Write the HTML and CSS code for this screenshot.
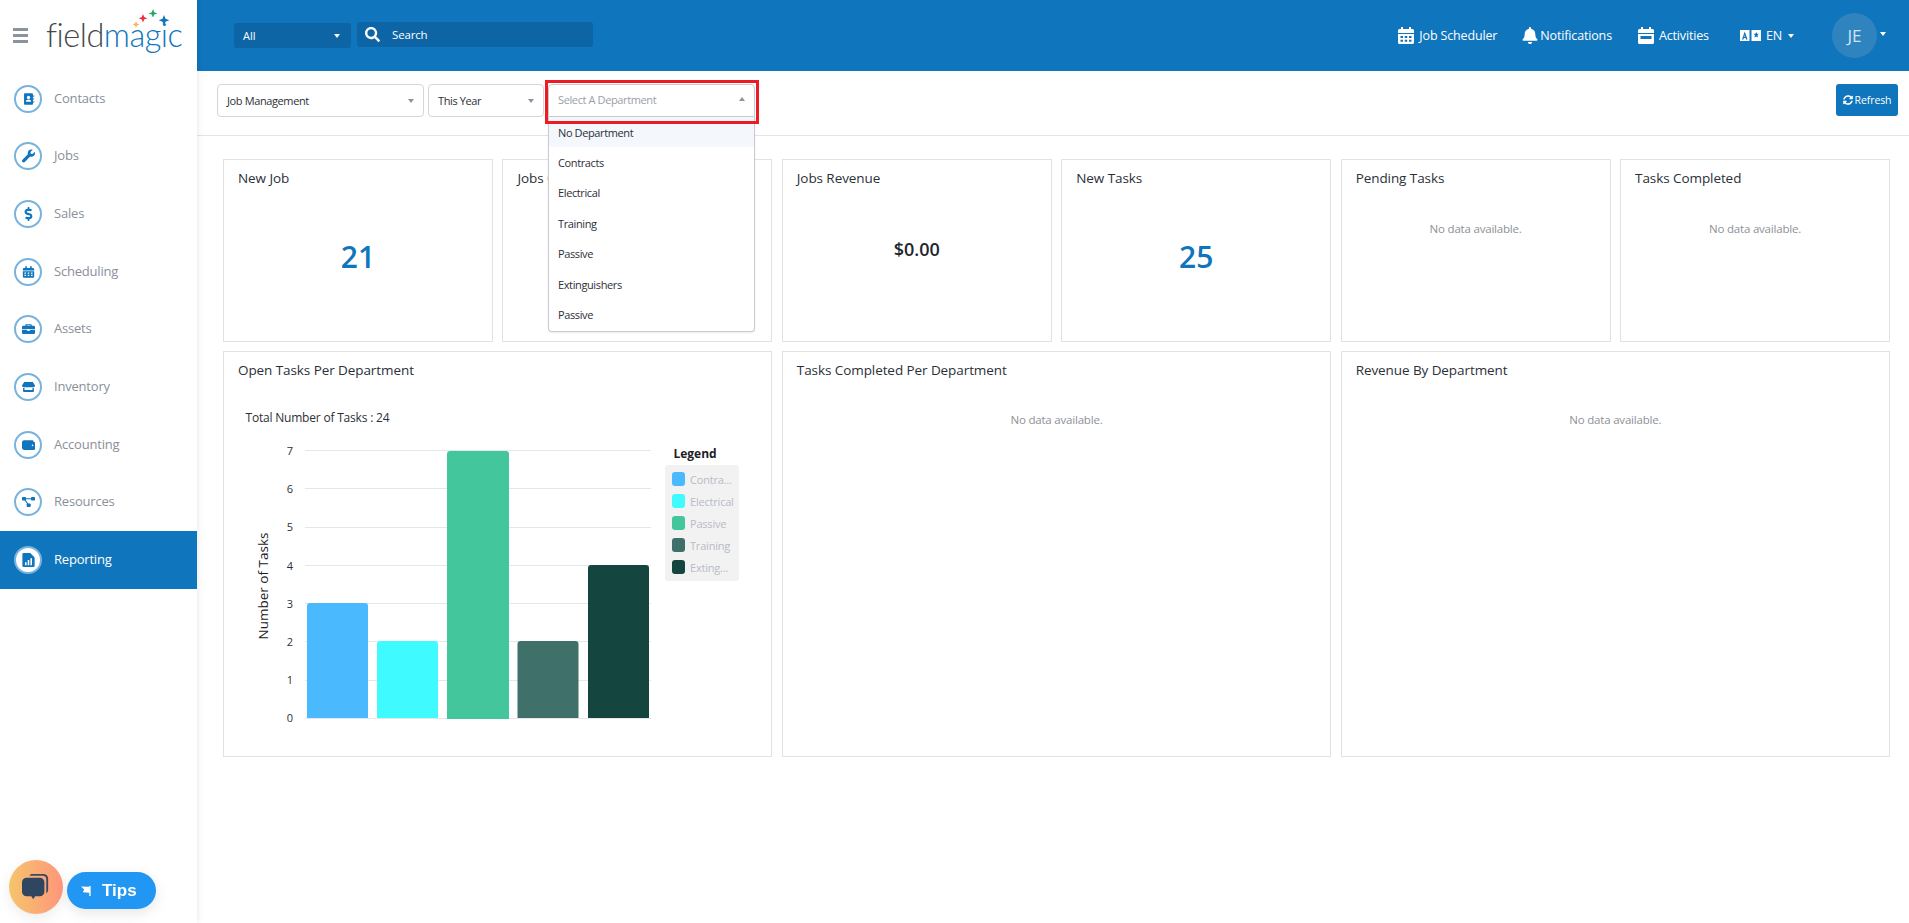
FILE: index.html
```html
<!DOCTYPE html>
<html lang="en">
<head>
<meta charset="utf-8">
<title>Reporting</title>
<link rel="stylesheet" href="styles.css">
</head>
<body>
<div class="app">
  <aside class="sidebar">
    <div class="brand">
      <div class="burger"><span></span><span></span><span></span></div>
      <div class="logo">
        <span class="logo-dark">field</span><span class="logo-blue">magic</span>
        <svg class="logo-stars" viewBox="0 0 40 20"><path fill="#f7b45a" d="M3 12l1 2.500 2.500 1-2.500 1-1 2.500-1-2.500-2.500-1 2.500-1z"/><path fill="#ed2f3f" d="M10 5l1.200 3 3 1.200-3 1.200-1.200 3-1.200-3-3-1.200 3-1.200z"/><path fill="#1fa866" d="M20 0l1.200 3.200 3.200 1.200-3.200 1.200-1.200 3.200-1.200-3.200-3.200-1.200 3.200-1.200z"/><path fill="#0f75bc" d="M31 6l1.500 3.800 3.800 1.500-3.800 1.500-1.500 3.800-1.500-3.800-3.800-1.500 3.800-1.500z"/></svg>
      </div>
    </div>
    <nav class="nav">
      <a class="nav-item"><span class="ring"><svg viewBox="0 0 16 16"><path fill="#0f75bc" d="M3.500 1h9a1 1 0 0 1 1 1v12a1 1 0 0 1-1 1h-9a1 1 0 0 1-1-1V2a1 1 0 0 1 1-1z"/><circle cx="8" cy="6" r="2" fill="#fff"/><path fill="#fff" d="M4.800 11.500c0-2 1.400-3 3.200-3s3.200 1 3.200 3z"/><path fill="#0f75bc" d="M14 3.500h1v2h-1zM14 7h1v2h-1zM14 10.500h1v2h-1z"/></svg></span>Contacts</a>
      <a class="nav-item"><span class="ring"><svg viewBox="0 0 512 512"><path fill="#0f75bc" d="M507.730 109.100c-2.240-9.030-13.540-12.090-20.120-5.510l-74.360 74.360-67.880-11.310-11.310-67.880 74.360-74.360c6.620-6.620 3.430-17.900-5.660-20.160-47.380-11.740-99.550.91-136.580 37.930-39.640 39.640-50.550 97.100-34.050 147.200L18.740 402.760c-24.990 24.990-24.990 65.510 0 90.500 24.990 24.990 65.510 24.990 90.500 0l213.210-213.210c50.120 16.710 107.470 5.680 147.370-34.220 37.070-37.070 49.700-89.320 37.910-136.730z"/></svg></span>Jobs</a>
      <a class="nav-item"><span class="ring"><svg viewBox="0 0 288 512"><path fill="#0f75bc" d="M209.200 233.400l-108-31.600C88.700 198.200 80 186.500 80 173.500c0-16.300 13.200-29.500 29.500-29.500h66.300c12.200 0 24.200 3.700 34.200 10.500 6.100 4.100 14.300 3.100 19.500-2l34.800-34c7.100-6.900 6.100-18.400-1.800-24.500C238 74.800 207.400 64.100 176 64V16c0-8.800-7.200-16-16-16h-32c-8.800 0-16 7.200-16 16v48h-2.500C45.800 64-5.400 118.700.5 183.600c4.200 46.100 39.400 83.600 83.800 96.600l102.500 30c12.500 3.700 21.200 15.300 21.200 28.300 0 16.300-13.200 29.500-29.500 29.500h-66.300C100 368 88 364.300 78 357.500c-6.100-4.100-14.300-3.100-19.500 2l-34.800 34c-7.100 6.900-6.100 18.400 1.800 24.500 24.500 19.200 55.100 29.900 86.500 30v48c0 8.800 7.200 16 16 16h32c8.800 0 16-7.200 16-16v-48.200c46.600-.9 90.300-28.600 105.700-72.700 21.500-61.600-14.600-124.800-72.500-141.700z"/></svg></span>Sales</a>
      <a class="nav-item"><span class="ring"><svg viewBox="0 0 16 16"><path fill="#0f75bc" d="M4 1h2v2h4V1h2v2h1.500A1.500 1.500 0 0 1 15 4.500V6H1V4.500A1.500 1.500 0 0 1 2.500 3H4zM1 7h14v6.500a1.500 1.500 0 0 1-1.500 1.500h-11A1.500 1.500 0 0 1 1 13.500z"/><path fill="#fff" d="M3 8.500h2V10H3zM7 8.500h2V10H7zM11 8.500h2V10h-2zM3 11.500h2V13H3zM7 11.500h2V13H7zM11 11.500h2V13h-2z"/></svg></span>Scheduling</a>
      <a class="nav-item"><span class="ring"><svg viewBox="0 0 16 16"><path fill="#0f75bc" d="M5 2h6a1 1 0 0 1 1 1v1h2.500A1.500 1.500 0 0 1 16 5.500V8H0V5.500A1.500 1.500 0 0 1 1.500 4H4V3a1 1 0 0 1 1-1zm.500 1.500V4h5v-.5zM0 9h6.500v1.500h3V9H16v3.500a1.500 1.500 0 0 1-1.500 1.500h-13A1.500 1.500 0 0 1 0 12.500z"/></svg></span>Assets</a>
      <a class="nav-item"><span class="ring"><svg viewBox="0 0 18 16"><path fill="#0f75bc" d="M3 1h12l3 5a2.500 2.500 0 0 1-2 2.500H2A2.500 2.500 0 0 1 0 6zM1.500 9.500h2V12h11V9.500h2V14a1 1 0 0 1-1 1h-13a1 1 0 0 1-1-1z"/></svg></span>Inventory</a>
      <a class="nav-item"><span class="ring"><svg viewBox="0 0 16 16"><path fill="#0f75bc" fill-rule="evenodd" d="M2.500 2H13a1 1 0 0 1 1 1v1h.5A1.500 1.500 0 0 1 16 5.500v7a1.500 1.500 0 0 1-1.500 1.500h-12A2.500 2.500 0 0 1 0 11.500v-7A2.500 2.500 0 0 1 2.500 2zM12 8.500a1 1 0 1 0 2 0 1 1 0 0 0-2 0z"/></svg></span>Accounting</a>
      <a class="nav-item"><span class="ring"><svg viewBox="0 0 18 16"><path fill="none" stroke="#0f75bc" stroke-width="1.500" d="M3 3.500h12M3 3.500l6 8.500"/><rect x="0" y="1" width="5.500" height="5" rx="1" fill="#0f75bc"/><rect x="12.500" y="1" width="5.500" height="5" rx="1" fill="#0f75bc"/><rect x="6.500" y="10" width="5.500" height="5" rx="1" fill="#0f75bc"/></svg></span>Resources</a>
      <a class="nav-item active"><span class="ring"><svg viewBox="0 0 14 16"><path fill="#0f75bc" d="M1.500 0H9l5 5v9.500a1.500 1.500 0 0 1-1.500 1.500h-11A1.500 1.500 0 0 1 0 14.500v-13A1.500 1.500 0 0 1 1.500 0z"/><path fill="#fff" d="M3 10.500h1.800V14H3zM6.100 8h1.800v6H6.100zM9.200 6h1.800v8H9.200z"/></svg></span>Reporting</a>
    </nav>
  </aside>

  <main class="main">
    <header class="topbar">
      <div class="scope">All<i class="caret caret-white"></i></div>
      <div class="search">
        <svg class="search-icon" viewBox="0 0 512 512"><path fill="#fff" d="M505 442.700L405.300 343c-4.500-4.500-10.600-7-17-7H372c27.600-35.300 44-79.700 44-128C416 93.100 322.900 0 208 0S0 93.100 0 208s93.100 208 208 208c48.300 0 92.700-16.400 128-44v16.300c0 6.400 2.500 12.500 7 17l99.700 99.700c9.400 9.400 24.600 9.400 33.900 0l28.300-28.300c9.400-9.400 9.400-24.600.1-34zM208 336c-70.700 0-128-57.200-128-128 0-70.700 57.200-128 128-128 70.700 0 128 57.200 128 128 0 70.700-57.200 128-128 128z"/></svg>
        <span>Search</span>
      </div>
      <div class="top-actions">
        <a class="top-link sched"><svg viewBox="0 0 16 17"><path fill="#fff" d="M3 0h2v2h6V0h2v2h1.500A1.500 1.500 0 0 1 16 3.500V6H0V3.500A1.500 1.500 0 0 1 1.500 2H3zM0 7h16v8.500a1.500 1.500 0 0 1-1.500 1.500h-13A1.500 1.500 0 0 1 0 15.500z"/><path fill="#0f75bc" d="M2.500 9h2.500v2H2.500zM6.750 9h2.500v2h-2.500zM11 9h2.500v2H11zM2.500 12.700h2.500v2H2.500zM6.750 12.700h2.500v2h-2.500zM11 12.700h2.500v2H11z"/></svg>Job Scheduler</a>
        <a class="top-link notif"><svg viewBox="0 0 448 512"><path fill="#fff" d="M224 512c35.320 0 63.970-28.650 63.970-64H160.030c0 35.350 28.650 64 63.970 64zm215.390-149.710c-19.320-20.760-55.470-51.990-55.470-154.290 0-77.700-54.480-139.900-127.940-155.160V32c0-17.670-14.320-32-31.980-32s-31.980 14.330-31.980 32v20.840C118.560 68.100 64.080 130.300 64.080 208c0 102.300-36.150 133.530-55.470 154.290-6 6.450-8.660 14.160-8.610 21.710.11 16.400 12.980 32 32.100 32h383.800c19.120 0 32-15.600 32.100-32 .05-7.550-2.610-15.270-8.610-21.710z"/></svg>Notifications</a>
        <a class="top-link activ"><svg viewBox="0 0 16 17"><path fill="#fff" d="M3 0h2v2h6V0h2v2h1.500A1.500 1.500 0 0 1 16 3.500V6H0V3.500A1.500 1.500 0 0 1 1.500 2H3zM0 7h16v8.500a1.500 1.500 0 0 1-1.500 1.500h-13A1.500 1.500 0 0 1 0 15.500z"/><path fill="#0f75bc" d="M2.500 9h11v3h-11z"/></svg>Activities</a>
        <a class="top-link lang"><svg viewBox="0 0 21 11"><rect width="9.500" height="11" fill="#fff"/><rect x="11.500" width="9.500" height="11" fill="#fff"/><path fill="#0f75bc" d="M4.750 1.500L7.500 9.500H6.100l-.5-1.600H3.900l-.5 1.600H2zM4.250 6.800h1L4.750 5zM16.250 2l.8 1.800h1.700l-1.200 1.500.6 2.200-1.900-1-1.900 1 .6-2.200-1.200-1.500h1.700z"/></svg>EN<i class="caret caret-white"></i></a>
        <div class="avatar">JE</div>
        <i class="caret caret-white avatar-caret"></i>
      </div>
    </header>

    <div class="toolbar">
      <div class="select wide"><span>Job Management</span><i class="caret caret-gray"></i></div>
      <div class="select narrow"><span>This Year</span><i class="caret caret-gray"></i></div>
      <div class="dept-wrap">
        <div class="select wide open"><span class="placeholder">Select A Department</span><i class="caret caret-gray caret-up"></i></div>
        <ul class="dropdown">
          <li class="hover">No Department</li>
          <li>Contracts</li>
          <li>Electrical</li>
          <li>Training</li>
          <li>Passive</li>
          <li>Extinguishers</li>
          <li>Passive</li>
        </ul>
        <div class="highlight"></div>
      </div>
      <button class="refresh"><svg viewBox="0 0 512 512"><path fill="#fff" d="M370.720 133.280C339.458 104.008 298.888 87.962 255.848 88c-77.458.068-144.328 53.178-162.791 126.850-1.344 5.363-6.122 9.150-11.651 9.150H24.103c-7.498 0-13.194-6.807-11.807-14.176C33.933 94.924 134.813 8 256 8c66.448 0 126.791 26.136 171.315 68.685L463.030 40.970C478.149 25.851 504 36.559 504 57.941V192c0 13.255-10.745 24-24 24H345.941c-21.382 0-32.090-25.851-16.971-40.971l41.750-41.749zM32 296h134.059c21.382 0 32.090 25.851 16.971 40.971l-41.750 41.750c31.262 29.273 71.835 45.319 114.876 45.280 77.418-.07 144.315-53.144 162.787-126.849 1.344-5.363 6.122-9.150 11.651-9.150h57.304c7.498 0 13.194 6.807 11.807 14.176C478.067 417.076 377.187 504 256 504c-66.448 0-126.791-26.136-171.315-68.685L48.970 471.030C33.851 486.149 8 475.441 8 454.059V320c0-13.255 10.745-24 24-24z"/></svg>Refresh</button>
    </div>

    <section class="dashboard">
      <article class="card"><h3>New Job</h3><div class="big">21</div></article>
      <article class="card"><h3>Jobs Completed</h3></article>
      <article class="card"><h3>Jobs Revenue</h3><div class="money">$0.00</div></article>
      <article class="card"><h3>New Tasks</h3><div class="big">25</div></article>
      <article class="card"><h3>Pending Tasks</h3><p class="empty small-empty">No data available.</p></article>
      <article class="card"><h3>Tasks Completed</h3><p class="empty small-empty">No data available.</p></article>

      <article class="card panel">
        <h3>Open Tasks Per Department</h3>
        <svg class="chart" viewBox="0 0 548 340" width="548" height="340">
          <text class="total" x="21.500" y="16">Total Number of Tasks : 24</text>
          <g class="grid">
            <line x1="81" x2="427" y1="44.500" y2="44.500"/><line x1="81" x2="427" y1="82.500" y2="82.500"/><line x1="81" x2="427" y1="121.500" y2="121.500"/><line x1="81" x2="427" y1="159.500" y2="159.500"/><line x1="81" x2="427" y1="197.500" y2="197.500"/><line x1="81" x2="427" y1="235.500" y2="235.500"/><line x1="81" x2="427" y1="274.500" y2="274.500"/><line x1="81" x2="427" y1="312.500" y2="312.500"/>
          </g>
          <g class="ticks">
            <text x="66" y="49">7</text><text x="66" y="87">6</text><text x="66" y="125">5</text><text x="66" y="164">4</text><text x="66" y="202">3</text><text x="66" y="240">2</text><text x="66" y="278">1</text><text x="66" y="316">0</text>
          </g>
          <text class="axis" transform="translate(44 180) rotate(-90)">Number of Tasks</text>
          <path fill="#4ab9fe" d="M83 312v-112a3 3 0 0 1 3-3h55a3 3 0 0 1 3 3v112z"/>
          <path fill="#3ffbff" d="M153 312v-74a3 3 0 0 1 3-3h55a3 3 0 0 1 3 3v74z"/>
          <path fill="#44c69d" d="M223 313v-265a3 3 0 0 1 3-3h56a3 3 0 0 1 3 3v265z"/>
          <path fill="#3f7069" d="M293.500 312v-74a3 3 0 0 1 3-3h55a3 3 0 0 1 3 3v74z"/>
          <path fill="#15453f" d="M364 312v-150a3 3 0 0 1 3-3h55a3 3 0 0 1 3 3v150z"/>
          <text class="legend-title" x="471" y="52">Legend</text>
          <rect x="441" y="59" width="74" height="116" rx="3" fill="#f2f2f2"/>
          <g class="legend">
            <rect x="448" y="66" width="13" height="14" rx="3" fill="#4ab9fe"/><text x="466" y="78">Contra...</text>
            <rect x="448" y="88" width="13" height="14" rx="3" fill="#3ffbff"/><text x="466" y="100">Electrical</text>
            <rect x="448" y="110" width="13" height="14" rx="3" fill="#44c69d"/><text x="466" y="122">Passive</text>
            <rect x="448" y="132" width="13" height="14" rx="3" fill="#3f7069"/><text x="466" y="144">Training</text>
            <rect x="448" y="154" width="13" height="14" rx="3" fill="#15453f"/><text x="466" y="166">Exting...</text>
          </g>
        </svg>
      </article>
      <article class="card panel"><h3>Tasks Completed Per Department</h3><p class="empty">No data available.</p></article>
      <article class="card panel"><h3>Revenue By Department</h3><p class="empty">No data available.</p></article>
    </section>
  </main>
</div>

<div class="floaters">
  <div class="chat"><svg viewBox="0 0 30 30"><path fill="#2f4560" d="M10 1h13a5 5 0 0 1 5 5v12a5 5 0 0 1-2 4V7a4 4 0 0 0-4-4H8a4 4 0 0 1 2-2z" opacity=".95"/><path fill="#2f4560" d="M5 5h14a5 5 0 0 1 5 5v10a5 5 0 0 1-5 5h-5l-2 3-2-3H5a5 5 0 0 1-5-5V10a5 5 0 0 1 5-5z"/></svg></div>
  <div class="tips"><svg viewBox="0 0 12 12"><path fill="#fff" d="M0 1.500l9 .5v-1h1.500v11H9V8.500L2 8l1.500-3.200z"/></svg>Tips</div>
</div>
</body>
</html>
```

FILE: styles.css
```css
* { box-sizing: border-box; }
html, body { margin: 0; height: 100%; background: #fff; overflow: hidden; }
body { font-family: "Open Sans", "Noto Sans", "Liberation Sans", sans-serif; font-size: 12px; color: #2b3038; }
a { color: inherit; text-decoration: none; }
h3, p, ul { margin: 0; padding: 0; }

.app { display: flex; height: 923px; }

/* sidebar */
.sidebar { width: 197px; flex: none; background: #fff; box-shadow: 0 0 6px rgba(0, 0, 0, .12); position: relative; z-index: 2; }
.brand { height: 70px; display: flex; align-items: center; padding-left: 13px; }
.burger { width: 15px; display: flex; flex-direction: column; gap: 3px; }
.burger span { height: 3px; background: #8b949c; }
.logo { position: relative; margin-left: 18px; font-family: Lato, "Open Sans", sans-serif; font-weight: 300; font-size: 32.500px; line-height: 40px; letter-spacing: -.5px; white-space: nowrap; }
.logo-dark { color: #45474b; }
.logo-blue { color: #0f75bc; }
.logo-stars { position: absolute; left: 87px; top: -6px; width: 40px; height: 20px; }
.nav { display: flex; flex-direction: column; }
.nav-item { height: 57.630px; display: flex; align-items: center; padding-left: 14px; gap: 12px; font-size: 13px; letter-spacing: -.2px; color: #8a8f9a; padding-bottom: 2px; }
.ring { width: 28px; height: 28px; border-radius: 50%; border: 2px solid #78b3dd; display: flex; align-items: center; justify-content: center; background: #fff; margin-top: 2px; }
.ring svg { width: 13px; height: 14px; }
.nav-item.active { background: #0f75bc; color: #fff; }
.nav-item.active .ring { box-shadow: 0 0 0 1px #fff inset; }

/* top bar */
.main { flex: 1; min-width: 0; }
.topbar { height: 71px; background: #0f75bc; display: flex; align-items: center; padding-left: 37px; color: #fff; }
.scope { width: 117px; height: 25px; margin-right: 6px; background: #0d65a5; border-radius: 3px; display: flex; align-items: center; justify-content: space-between; padding: 0 11px 0 9px; font-size: 11px; }
.search { width: 236px; height: 25px; margin-bottom: 2px; background: #0d65a5; border-radius: 3px; display: flex; align-items: center; padding-left: 8px; gap: 12px; font-size: 11.500px; letter-spacing: -.15px; }
.search-icon { width: 15px; height: 15px; }
.top-actions { margin-left: auto; display: flex; align-items: center; padding-right: 23px; }
.top-link { display: flex; align-items: center; font-size: 12.500px; letter-spacing: -.15px; white-space: nowrap; }
.top-link svg { height: 17px; width: 16px; }
.sched { gap: 5px; margin-right: 25px; }
.notif { gap: 2px; margin-right: 26px; }
.activ { gap: 5px; margin-right: 31px; }
.lang { gap: 5px; margin-right: 38px; }
.top-link.lang svg { width: 21px; height: 11px; }
.lang .caret { margin-left: 1px; }
.avatar { width: 45px; height: 45px; border-radius: 50%; background: #2f84c0; color: #cfe3f2; display: flex; align-items: center; justify-content: center; font-size: 17px; }
.avatar-caret { margin: -4px 0 0 3px; }

.caret { display: inline-block; width: 0; height: 0; border-left: 3.500px solid transparent; border-right: 3.500px solid transparent; border-top: 4px solid currentColor; }
.caret-white { color: #fff; }
.caret-gray { color: #8f939a; }
.caret-up { border-top: 0; border-bottom: 4px solid #8f939a; }

/* toolbar */
.toolbar { height: 65px; border-bottom: 1px solid #e2e4e6; padding: 13px 11px 0 20px; display: flex; align-items: flex-start; gap: 4px; font-size: 11px; letter-spacing: -.38px; }
.select { height: 33px; border: 1px solid #d3d6da; border-radius: 4px; background: #fff; display: flex; align-items: center; justify-content: space-between; padding: 0 9px; }
.wide { width: 207px; }
.narrow { width: 116px; }
.placeholder { color: #9a9ea6; }
.dept-wrap { position: relative; }
.select.open { border-radius: 4px 4px 0 0; border-color: #c8cbcf; padding-right: 9px; padding-bottom: 3px; }
.dropdown { position: absolute; left: 0; top: 33px; width: 207px; height: 215px; list-style: none; background: #fff; border: 1px solid #c8cbcf; border-top: 0; border-radius: 0 0 4px 4px; box-shadow: 0 1px 2px rgba(0, 0, 0, .08); z-index: 3; }
.dropdown li { height: 30.500px; padding-left: 9px; display: flex; align-items: center; }
.dropdown li.hover { height: 30px; background: #f4f8fc; }
.highlight { position: absolute; left: -3px; top: -4px; width: 214px; height: 44px; border: 3px solid #ed1c24; z-index: 4; pointer-events: none; }
.refresh { margin-left: auto; width: 62px; height: 32px; border: 0; border-radius: 3px; background: #0f75bc; color: #fff; font: inherit; font-size: 10.500px; letter-spacing: -.1px; display: flex; align-items: center; justify-content: center; gap: 2px; padding: 0; }
.refresh svg { width: 10px; height: 10px; }

/* dashboard */
.dashboard { padding: 23px 19px 0 26px; display: grid; grid-template-columns: repeat(6, 1fr); grid-template-rows: 183px 406px; column-gap: 9.500px; row-gap: 9px; }
.card { border: 1px solid #e0e2e5; padding: 0 14px; position: relative; min-width: 0; }
.card h3 { font-size: 13.500px; font-weight: 400; letter-spacing: -.08px; line-height: 18px; margin-top: 9px; color: #2b3038; white-space: nowrap; }
.big { font-size: 30px; line-height: 40px; font-weight: 600; color: #0f75bc; text-align: center; margin-top: 50px; }
.money { font-size: 18px; line-height: 24px; font-weight: 600; color: #22262c; text-align: center; margin-top: 50px; }
.empty { text-align: center; color: #8d9198; font-size: 11.500px; letter-spacing: -.2px; line-height: 16px; margin-top: 33px; }
.small-empty { margin-top: 34px; }
.panel { grid-column: span 2; padding-right: 0; }
.panel > .empty { padding-right: 14px; }
.chart { display: block; margin: 27px 0 0 -14px; overflow: visible; }
.chart text { font-family: "Open Sans", "Noto Sans", sans-serif; }
.total { font-size: 12px; letter-spacing: -.2px; fill: #2b3038; }
.grid line { stroke: #e6e7e9; stroke-width: 1.200; }
.ticks text { font-size: 11px; fill: #2b3038; text-anchor: middle; }
.axis { font-size: 13.500px; fill: #1d2025; text-anchor: middle; }
.legend-title { font-size: 12px; font-weight: 700; fill: #1d2025; text-anchor: middle; }
.legend text { font-size: 11px; letter-spacing: -.2px; fill: #b7bbc7; }

/* floating */
.floaters { position: fixed; left: 9px; top: 860px; display: flex; align-items: center; gap: 4px; z-index: 5; }
.chat { width: 54px; height: 54px; border-radius: 50%; background: linear-gradient(90deg, #f5c46c, #ff967c); display: flex; align-items: center; justify-content: center; box-shadow: 0 4px 14px rgba(0, 0, 0, .08); }
.chat svg { width: 28px; height: 28px; }
.tips { width: 89px; height: 37px; margin-top: 7px; border-radius: 19px; background: #2196f3; color: #fff; font-family: "Liberation Sans", Arial, sans-serif; font-weight: 700; font-size: 17px; display: flex; align-items: center; padding-left: 14px; gap: 10px; box-shadow: 0 4px 14px rgba(0, 0, 0, .1); }
.tips svg { width: 11px; height: 11px; }
```
